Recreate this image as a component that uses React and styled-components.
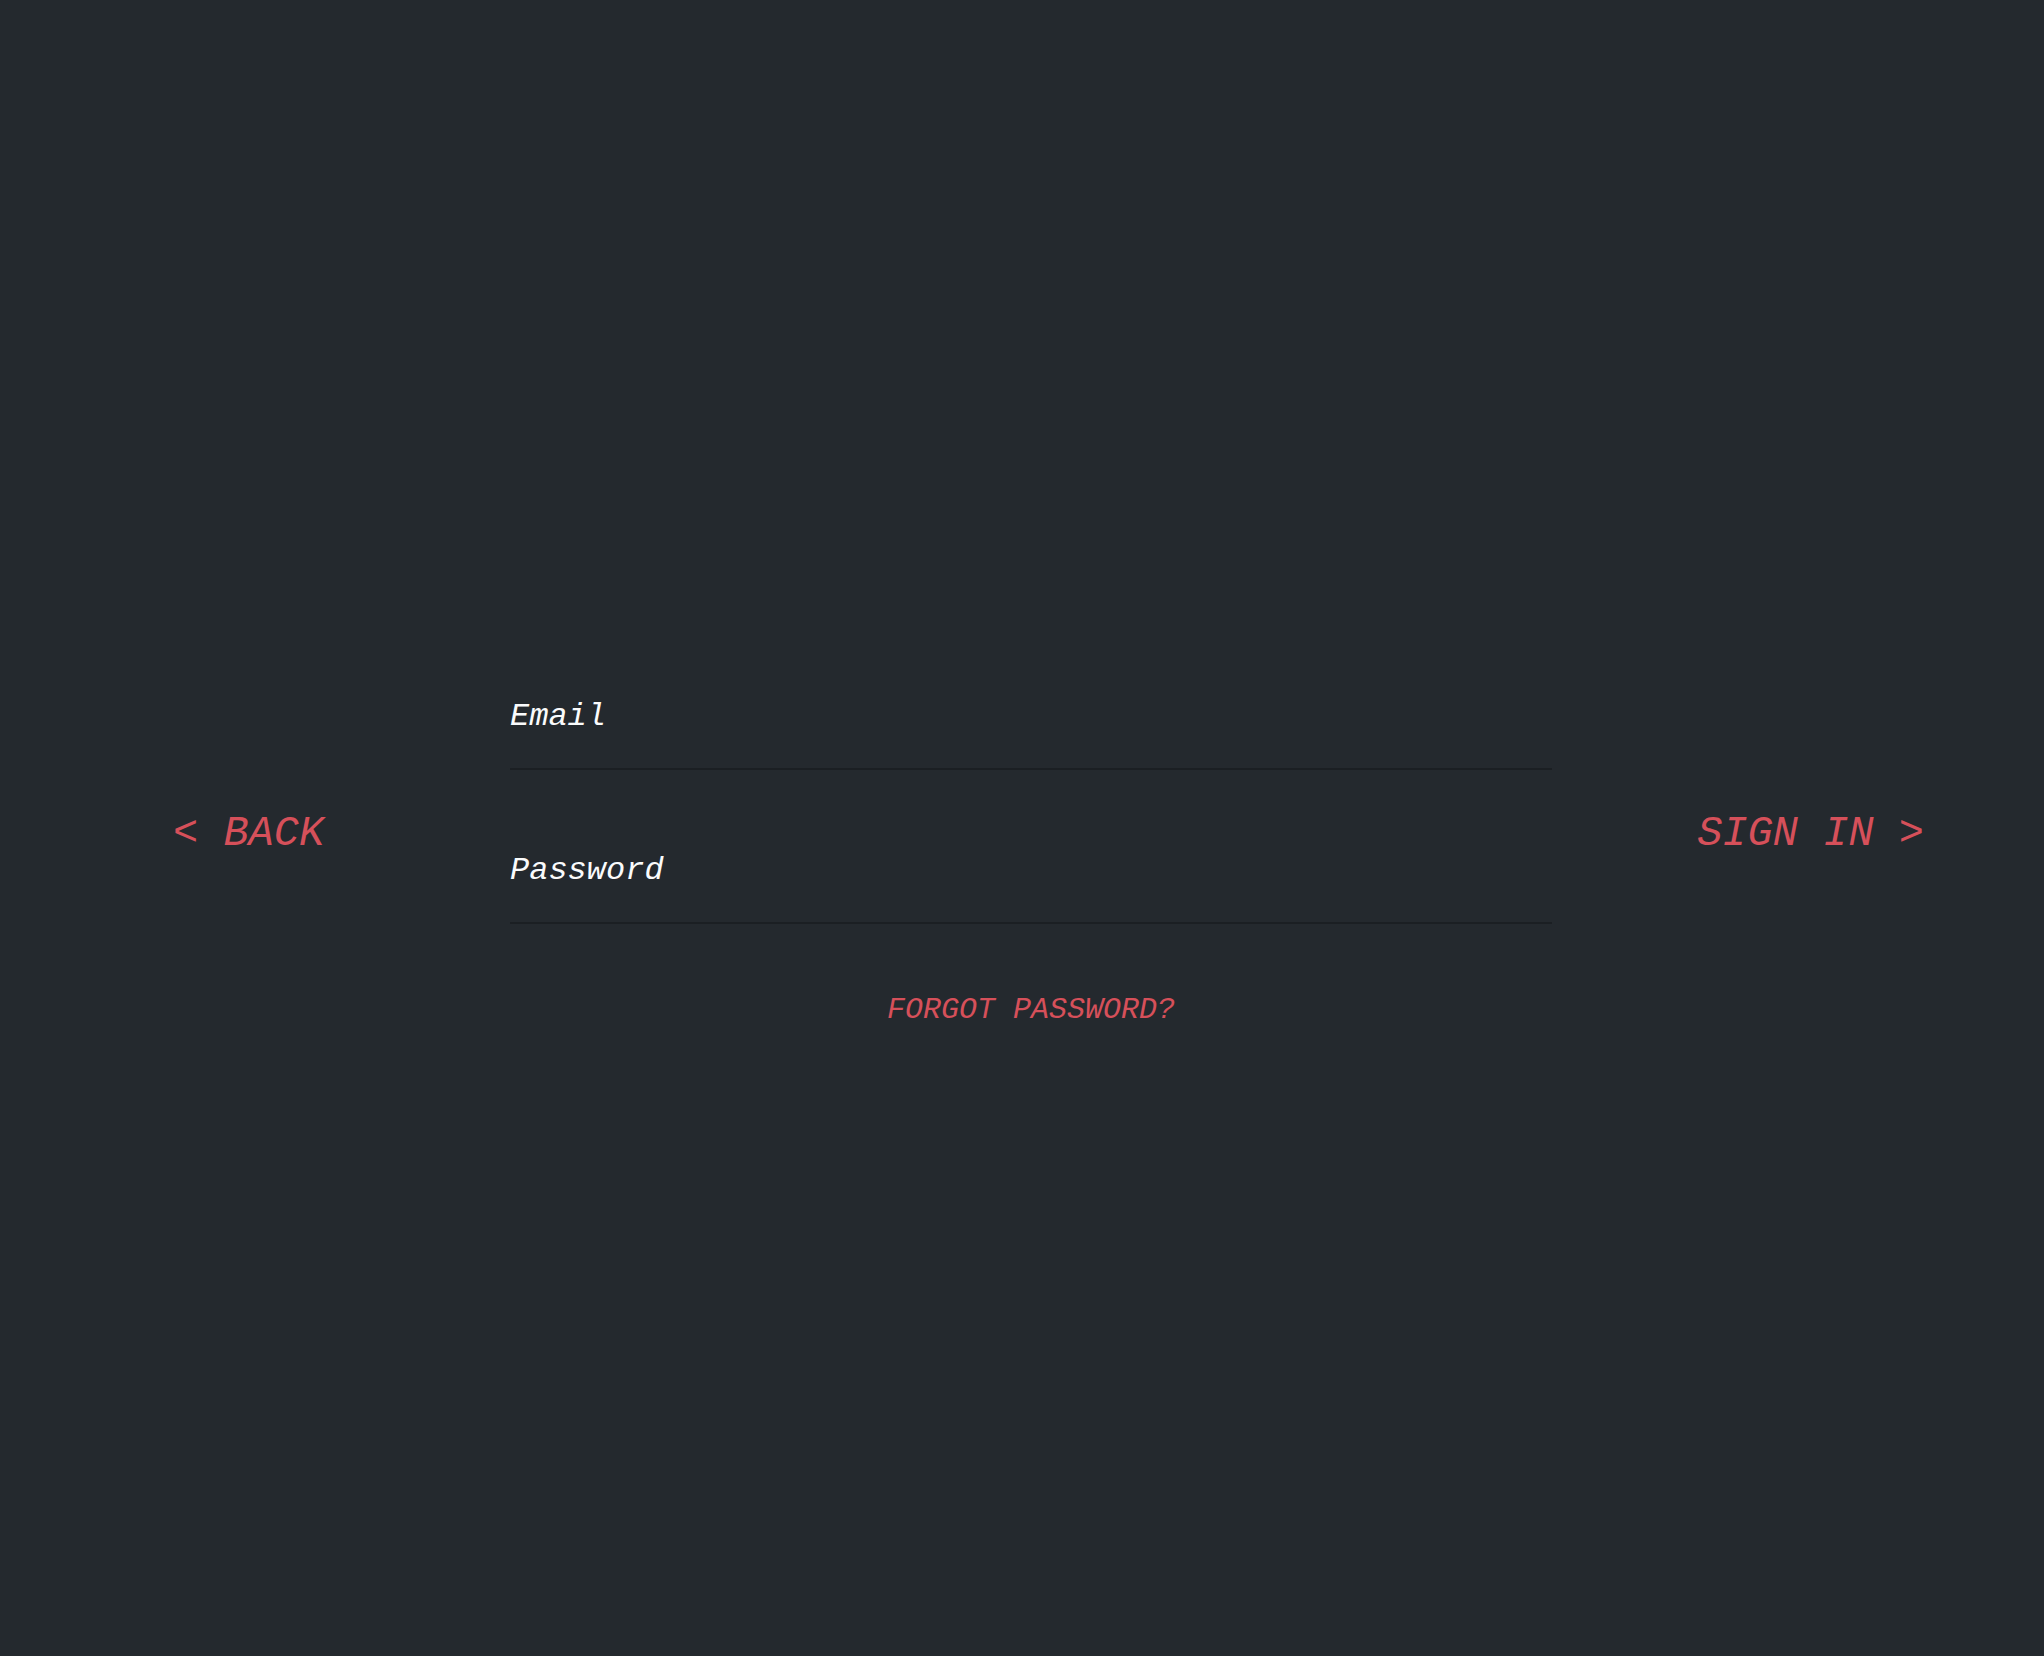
import React from "react";
import styled, { createGlobalStyle } from "styled-components";

const Global = createGlobalStyle`
  html, body {
    margin: 0;
    padding: 0;
    background: #24292e;
  }
  * { box-sizing: border-box; }
`;

const Page = styled.div`
  min-height: 100vh;
  background: #24292e;
  font-family: "Liberation Mono", "DejaVu Sans Mono", monospace;
  font-style: italic;
  padding-top: 695px;
`;

const Row = styled.div`
  display: grid;
  grid-template-columns: 341px 1042px 1fr;
  padding: 0 120px 0 169px;
  align-items: start;
`;

const NavButton = styled.button`
  background: none;
  border: none;
  padding: 0;
  margin-top: 114px;
  margin-left: ${(p) => (p.$right ? "0" : "4px")};
  font-family: inherit;
  font-style: italic;
  font-size: 42px;
  line-height: 50px;
  color: #d6505a;
  white-space: pre;
  cursor: pointer;
  justify-self: ${(p) => (p.$right ? "end" : "start")};
`;

const Form = styled.form`
  display: flex;
  flex-direction: column;
  gap: 79px;
  margin: 0;
`;

const Field = styled.input`
  display: block;
  width: 100%;
  height: 75px;
  padding: 1px 0 32px 0;
  background: transparent;
  border: none;
  border-bottom: 2px solid #1b1f23;
  outline: none;
  font-family: inherit;
  font-style: italic;
  font-size: 32px;
  line-height: 40px;
  color: #fafbfc;
  &::placeholder {
    color: #fafbfc;
    opacity: 1;
  }
`;

const Forgot = styled.a`
  display: block;
  margin-top: -13px;
  text-align: center;
  font-size: 30px;
  line-height: 40px;
  color: #d6505a;
  text-decoration: none;
  cursor: pointer;
`;

export default function App() {
  return (
    <>
      <Global />
      <Page>
        <Row>
          <NavButton type="button">{"< BACK"}</NavButton>
          <Form onSubmit={(e) => e.preventDefault()}>
            <Field type="email" placeholder="Email" />
            <Field type="password" placeholder="Password" />
            <Forgot>FORGOT PASSWORD?</Forgot>
          </Form>
          <NavButton type="button" $right>{"SIGN IN >"}</NavButton>
        </Row>
      </Page>
    </>
  );
}
